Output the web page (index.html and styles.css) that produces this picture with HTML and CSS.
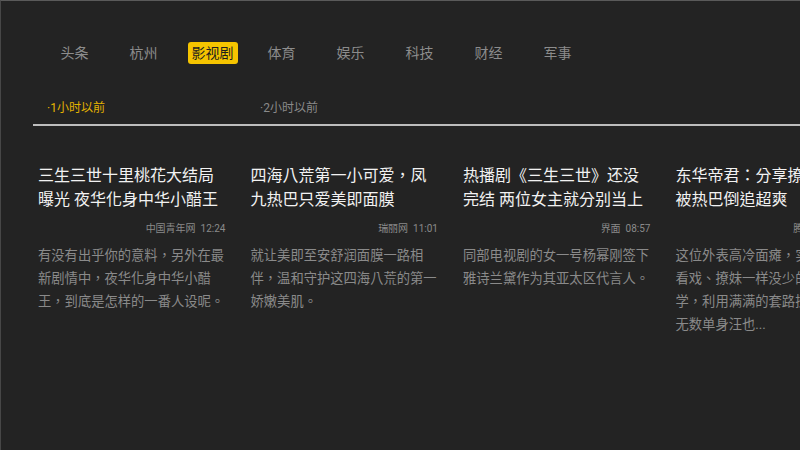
FILE: index.html
```html
<!DOCTYPE html>
<html lang="zh-TW">
<head>
    <meta charset="UTF-8">
    <meta name="viewport" content="width=device-width, initial-scale=1.0">
    <title>新闻 - 影视剧</title>
    <link rel="stylesheet" href="styles.css">
</head>
<body>
    <div class="screen">
        <nav class="tabs">
            <div class="tab"><span>头条</span></div>
            <div class="tab"><span>杭州</span></div>
            <div class="tab active"><span>影视剧</span></div>
            <div class="tab"><span>体育</span></div>
            <div class="tab"><span>娱乐</span></div>
            <div class="tab"><span>科技</span></div>
            <div class="tab"><span>财经</span></div>
            <div class="tab"><span>军事</span></div>
        </nav>

        <div class="times">
            <div class="time active">·1小时以前</div>
            <div class="time">·2小时以前</div>
        </div>

        <div class="news">
            <div class="item">
                <h3 class="title">三生三世十里桃花大结局曝光 夜华化身中华小醋王</h3>
                <div class="meta">中国青年网&nbsp; 12:24</div>
                <p class="desc">有没有出乎你的意料，另外在最新剧情中，夜华化身中华小醋王，到底是怎样的一番人设呢。</p>
            </div>
            <div class="item">
                <h3 class="title">四海八荒第一小可爱，凤九热巴只爱美即面膜</h3>
                <div class="meta">瑞丽网&nbsp; 11:01</div>
                <p class="desc">就让美即至安舒润面膜一路相伴，温和守护这四海八荒的第一娇嫩美肌。</p>
            </div>
            <div class="item">
                <h3 class="title">热播剧《三生三世》还没完结 两位女主就分别当上</h3>
                <div class="meta">界面&nbsp; 08:57</div>
                <p class="desc">同部电视剧的女一号杨幂刚签下雅诗兰黛作为其亚太区代言人。</p>
            </div>
            <div class="item">
                <h3 class="title">东华帝君：分享撩妹心得被热巴倒追超爽</h3>
                <div class="meta">腾讯娱乐&nbsp; 07:40</div>
                <p class="desc">这位外表高冷面瘫，实际闷骚的看戏、撩妹一样没少的恋爱哲学，利用满满的套路撩倒了女主无数单身汪也...</p>
            </div>
        </div>
    </div>
</body>
</html>
```

FILE: styles.css
```css
body {
    margin: 0;
    background-color: #232323;
    font-family: Roboto, "Noto Sans CJK TC", sans-serif;
}

.screen {
    width: 800px;
    height: 450px;
    box-sizing: border-box;
    border-top: 1px solid #5a5a5a;
    border-left: 1px solid #474747;
    background-color: #232323;
    overflow: hidden;
}

/* Category tabs */
.tabs {
    display: flex;
    padding: 41px 0 0 39px;
}

.tab {
    width: 69px;
    height: 22px;
    display: flex;
    align-items: center;
    justify-content: center;
    font-size: 14px;
    color: #8c8c8c;
}

.tab span {
    line-height: 22px;
}

.tab.active span {
    background: #f5c400;
    color: #1e1e1e;
    border-radius: 3px;
    padding: 0 4px;
}

/* Time filter */
.times {
    display: flex;
    margin: 33px 0 0 32px;
    padding-bottom: 5px;
    border-bottom: 2px solid #bdbdbd;
}

.time {
    width: 213px;
    padding-left: 14px;
    box-sizing: border-box;
    font-size: 12px;
    line-height: 22px;
    color: #8a8a8a;
}

.time.active {
    color: #e3b300;
}

/* News cards */
.news {
    display: flex;
    gap: 25px;
    padding-left: 37px;
    margin-top: 38px;
}

.item {
    width: 187.5px;
    flex-shrink: 0;
}

.title {
    margin: 0;
    font-size: 16px;
    font-weight: normal;
    line-height: 24px;
    color: #f2f2f2;
}

.meta {
    margin-top: 7px;
    text-align: right;
    font-size: 10px;
    line-height: 20px;
    color: #8a8a8a;
}

.desc {
    margin: 5px 0 0;
    font-size: 13.3px;
    line-height: 23px;
    color: #8a8a8a;
}
```
